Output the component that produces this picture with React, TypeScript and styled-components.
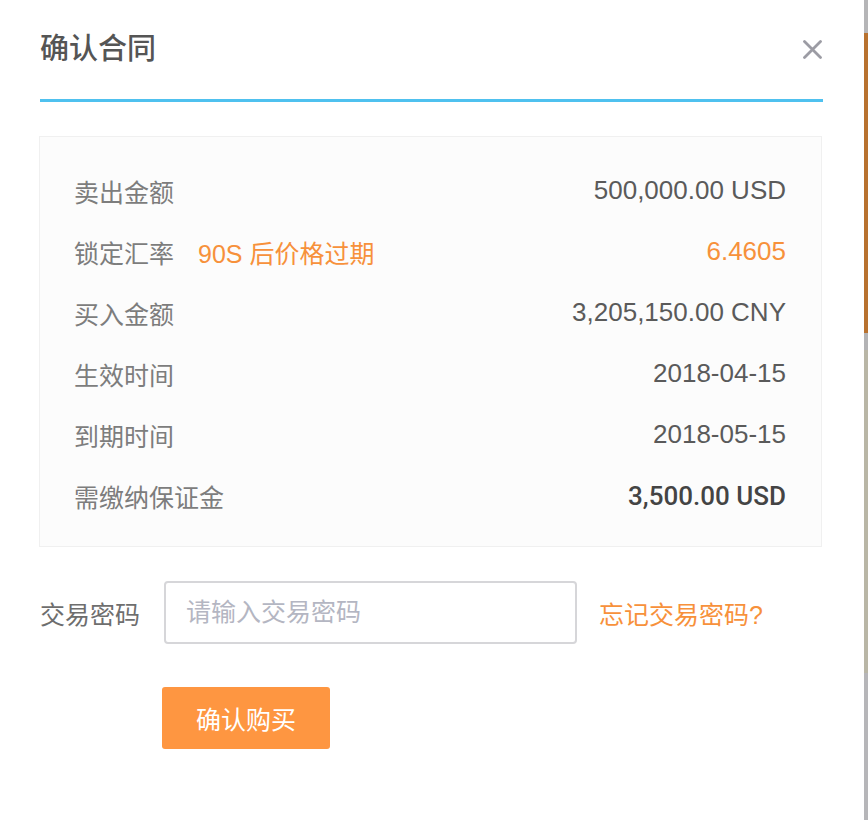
import React from "react";
import styled, { createGlobalStyle } from "styled-components";

const GlobalStyle = createGlobalStyle`
  html, body {
    margin: 0;
    padding: 0;
    background: #ffffff;
  }
  body {
    font-family: "Liberation Sans", "Noto Sans CJK SC", sans-serif;
  }
`;

const Page = styled.div`
  display: flex;
  width: 868px;
  height: 820px;
  overflow: hidden;
`;

const Modal = styled.div`
  width: 864px;
  flex-shrink: 0;
  background: #ffffff;
  padding: 31px 42px 0 40px;
  box-sizing: border-box;
  display: flex;
  flex-direction: column;
`;

const Header = styled.div`
  display: flex;
  align-items: center;
  justify-content: space-between;
  height: 36px;
`;

const Title = styled.h2`
  margin: 0;
  font-size: 29px;
  font-weight: 500;
  color: #555555;
  line-height: 36px;
`;

const CloseButton = styled.button`
  border: 0;
  background: none;
  padding: 0;
  width: 19px;
  height: 19px;
  display: flex;
  cursor: pointer;
`;

const Divider = styled.div`
  height: 3px;
  background: #4fc1ef;
  margin-top: 32px;
  margin-right: -1px;
`;

const InfoBox = styled.div`
  margin-top: 34px;
  margin-left: -1px;
  background: #fcfcfc;
  border: 1px solid #f0f0f0;
  padding: 23px 35px 20px 34px;
  display: flex;
  flex-direction: column;
`;

const Row = styled.div`
  height: 61px;
  display: flex;
  align-items: center;
  font-size: 25px;
  white-space: nowrap;
`;

const Label = styled.span`
  color: #7d7d7d;
  min-width: 100px;
  margin-right: 24px;
`;

const Hint = styled.span`
  color: #f7913b;
`;

const Value = styled.span<{ $tone?: "accent" | "strong" }>`
  margin-left: auto;
  font-size: 26px;
  font-family: ${(p) => (p.$tone === "strong" ? "Roboto, \"Liberation Sans\", sans-serif" : "inherit")};
  color: ${(p) => (p.$tone === "accent" ? "#f7913b" : p.$tone === "strong" ? "#444444" : "#5a5a5a")};
  font-weight: ${(p) => (p.$tone === "strong" ? 500 : 400)};
`;

const FormRow = styled.div`
  margin-top: 34px;
  display: flex;
  align-items: center;
  gap: 22px;
`;

const FormLabel = styled.label`
  font-size: 25px;
  color: #6e6e6e;
  width: 100px;
  margin-right: 2px;
`;

const PasswordInput = styled.input`
  width: 413px;
  height: 63px;
  box-sizing: border-box;
  border: 2px solid #d6d6d9;
  border-radius: 4px;
  padding: 0 20px;
  font-size: 25px;
  font-family: inherit;
  color: #555;
  outline: none;
  &::placeholder {
    color: #b4b6c2;
  }
`;

const ForgetLink = styled.a`
  font-size: 25px;
  color: #f7913b;
  cursor: pointer;
`;

const SubmitButton = styled.button`
  margin-top: 43px;
  margin-left: 122px;
  width: 168px;
  height: 62px;
  border: 0;
  border-radius: 3px;
  background: #fe9641;
  color: #ffffff;
  font-size: 25px;
  font-family: inherit;
  cursor: pointer;
`;

const Backdrop = styled.div`
  flex: 1;
  display: flex;
  flex-direction: column;
`;

const Strip = styled.div<{ $h: number; $c: string }>`
  height: ${(p) => p.$h}px;
  background: ${(p) => p.$c};
  flex-shrink: 0;
`;

const rows = [
  { label: "卖出金额", value: "500,000.00 USD" },
  { label: "锁定汇率", hint: "90S 后价格过期", value: "6.4605", tone: "accent" as const },
  { label: "买入金额", value: "3,205,150.00 CNY" },
  { label: "生效时间", value: "2018-04-15" },
  { label: "到期时间", value: "2018-05-15" },
  { label: "需缴纳保证金", value: "3,500.00 USD", tone: "strong" as const },
];

export default function App() {
  const [password, setPassword] = React.useState("");

  return (
    <Page>
      <GlobalStyle />
      <Modal>
        <Header>
          <Title>确认合同</Title>
          <CloseButton aria-label="close">
            <svg width="19" height="19" viewBox="0 0 19 19">
              <path d="M1.5 1.5 L17.5 17.5 M17.5 1.5 L1.5 17.5" stroke="#9c9ca4" strokeWidth="2.8" strokeLinecap="round" />
            </svg>
          </CloseButton>
        </Header>
        <Divider />
        <InfoBox>
          {rows.map((r) => (
            <Row key={r.label}>
              <Label>{r.label}</Label>
              {r.hint && <Hint>{r.hint}</Hint>}
              <Value $tone={r.tone}>{r.value}</Value>
            </Row>
          ))}
        </InfoBox>
        <FormRow>
          <FormLabel>交易密码</FormLabel>
          <PasswordInput
            type="password"
            placeholder="请输入交易密码"
            value={password}
            onChange={(e) => setPassword(e.target.value)}
          />
          <ForgetLink>忘记交易密码?</ForgetLink>
        </FormRow>
        <div>
          <SubmitButton>确认购买</SubmitButton>
        </div>
      </Modal>
      <Backdrop>
        <Strip $h={33} $c="#b5b5b7" />
        <Strip $h={300} $c="#b8722f" />
        <Strip $h={17} $c="#b3b3b5" />
        <Strip $h={323} $c="#b9b6a6" />
        <Strip $h={147} $c="#b6b6b9" />
      </Backdrop>
    </Page>
  );
}
